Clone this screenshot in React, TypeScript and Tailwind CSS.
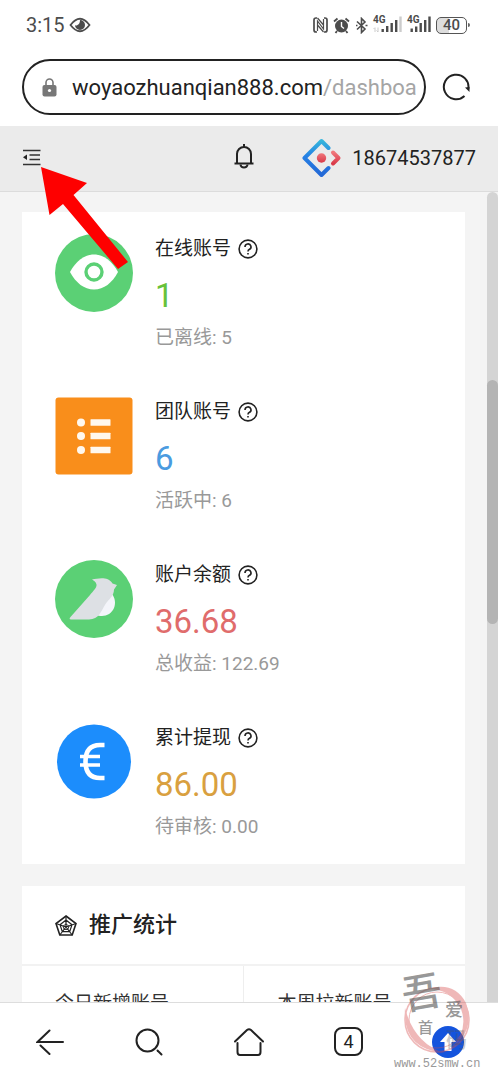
import React from "react";

type StatTone = "green" | "blue" | "red" | "amber";

interface Stat {
  label: string;
  value: string;
  note: string;
  tone: StatTone;
  icon: React.ReactNode;
}

const toneClass: Record<StatTone, string> = {
  green: "text-[#67c23a]",
  blue: "text-[#4a9be0]",
  red: "text-[#e06c6c]",
  amber: "text-[#d9a040]",
};

const EyeBadge = () => (
  <svg viewBox="0 0 78 78" className="size-[78px]" aria-hidden="true">
    <circle cx="39" cy="39" r="39" fill="#5bd075" />
    <path d="M15 38C21 27 29 20.500 39 20.500S57 27 63 38C57 49 49 55.500 39 55.500S21 49 15 38Z" fill="#fff" />
    <circle cx="39" cy="38" r="8" fill="none" stroke="#5bd075" strokeWidth="3.400" />
  </svg>
);

const ListBadge = () => (
  <svg viewBox="0 0 78 78" className="size-[78px]" aria-hidden="true">
    <rect x="0.500" y="0.500" width="77" height="77" rx="3" fill="#f98e1b" />
    <g fill="#fff8ee">
      {[25.5, 39, 53].map((y) => (
        <g key={y}>
          <circle cx="26" cy={y} r="4" />
          <rect x="35.500" y={y - 3.3} width="20" height="6.600" rx="0.600" />
        </g>
      ))}
    </g>
  </svg>
);

const BirdBadge = () => (
  <svg viewBox="0 0 78 78" className="size-[78px]" aria-hidden="true">
    <circle cx="39" cy="39" r="39" fill="#5bd075" />
    <path d="M57 34C60 38 61 43 59 48C57 53 52 56 47 56Q42 56.500 40 54L46 40Z" fill="#f4f5fa" />
    <path d="M37 19.500C43 18.500 53 16 57.500 23.500L62 25L59 29.500C59 36 54 39 50.500 44C46 51 44 59.500 34 59.500H16Q13.500 59.500 15.500 57L35 35C38 31 42 28 41.500 24.500C41 21.500 39 21 37 19.500Z" fill="#dde0e4" />
  </svg>
);

const EuroBadge = () => (
  <svg viewBox="0 0 78 78" className="size-[78px]" aria-hidden="true">
    <circle cx="39" cy="38.500" r="37" fill="#1c8dfc" />
    <path d="M49.500 22H45C35 22 30.500 28 30.500 38.500S35 55 45 55H49.500" fill="none" stroke="#fff" strokeWidth="4.600" />
    <path d="M25 33.500H45M25 42H45" stroke="#fff" strokeWidth="3.400" />
  </svg>
);

const stats: Stat[] = [
  { label: "在线账号", value: "1", note: "已离线: 5", tone: "green", icon: <EyeBadge /> },
  { label: "团队账号", value: "6", note: "活跃中: 6", tone: "blue", icon: <ListBadge /> },
  { label: "账户余额", value: "36.68", note: "总收益: 122.69", tone: "red", icon: <BirdBadge /> },
  { label: "累计提现", value: "86.00", note: "待审核: 0.00", tone: "amber", icon: <EuroBadge /> },
];

const WeakSignalIcon = () => (
  <svg viewBox="0 0 29 18" className="h-[18px] w-[29px]" aria-hidden="true">
    <path d="M2 12V16M0.500 13L2 11.500M5 11.500V16M3.500 14.500L5 16" stroke="#ccc" fill="none" />
    <g fill="#4c4c4c">
      <rect x="8.500" y="13" width="2.400" height="3" />
      <rect x="13" y="10" width="2.400" height="6" />
      <rect x="17.500" y="7" width="2.400" height="9" />
      <rect x="22" y="4" width="2.400" height="12" />
    </g>
    <rect x="26.300" y="0.500" width="2.400" height="15.500" fill="#ccc" />
  </svg>
);

const FullSignalIcon = () => (
  <svg viewBox="0 0 24 18" className="h-[18px] w-6" aria-hidden="true">
    <g fill="#4c4c4c">
      <rect x="3.500" y="12.500" width="2.400" height="3.500" />
      <rect x="8" y="10.500" width="2.400" height="5.500" />
      <rect x="12.500" y="7" width="2.400" height="9" />
      <rect x="17" y="4" width="2.400" height="12" />
      <rect x="21.300" y="0.500" width="2.400" height="15.500" />
    </g>
  </svg>
);

const StatusBar = () => (
  <div className="flex h-[50px] shrink-0 items-center justify-between pr-7 pl-[26px] text-[#4c4c4c]">
    <div className="flex items-center gap-1">
      <span className="text-xl leading-6">3:15</span>
      <svg viewBox="0 0 22 16" className="h-4 w-[22px]" aria-hidden="true">
        <path d="M1.500 8Q11-4.500 20.500 8Q11 20.500 1.500 8Z" fill="none" stroke="currentColor" strokeWidth="1.800" />
        <path d="M11 3A5 5 0 1 1 6 8Q7 9 8.500 8Q11 7 11 3Z" fill="currentColor" />
      </svg>
    </div>
    <div className="flex items-center gap-[5px]">
      <svg viewBox="0 0 15 16" className="h-4 w-[15px]" fill="none" stroke="currentColor" strokeWidth="1.700" aria-hidden="true">
        <path d="M4 1H3Q1 1 1 3V13Q1 15 3 15H4M11 1H12Q14 1 14 3V13Q14 15 12 15H11" />
        <path d="M4.500 14V4L10.500 12V2M4.500 1L10.500 8M4.500 8L10.500 15" strokeWidth="1.200" />
      </svg>
      <svg viewBox="0 0 17 17" className="size-[17px]" fill="none" aria-hidden="true">
        <circle cx="8.500" cy="9" r="6.500" fill="currentColor" />
        <path d="M1 4.500L4.500 1.500M16 4.500L12.500 1.500M4 14L2.500 16M13 14L14.500 16" stroke="currentColor" strokeWidth="1.800" />
        <path d="M8.500 5V9.500L11 11.500" stroke="#fff" strokeWidth="1.400" />
      </svg>
      <svg viewBox="0 0 13 17" className="h-[17px] w-[13px]" fill="none" stroke="currentColor" strokeWidth="1.600" aria-hidden="true">
        <path d="M2 4.500L10 12L6.500 15.500V1.500L10 5L2 12.500M1 8.500H2.500M10.500 8.500H12.500" />
      </svg>
      <div className="relative">
        <WeakSignalIcon />
        <span className="absolute -top-0.5 left-0 text-[10px] leading-3 font-bold">4G</span>
      </div>
      <div className="relative">
        <FullSignalIcon />
        <span className="absolute -top-0.5 left-0 text-[10px] leading-3 font-bold">4G</span>
      </div>
      <div className="flex items-center gap-px">
        <span className="flex h-[17px] w-[31px] items-center justify-center rounded-[5px] border border-[#555] bg-linear-to-r from-[#ddd] from-40% to-white to-40% text-[15px] leading-4 font-medium">
          40
        </span>
        <span className="h-1 w-0.5 rounded-r bg-[#666]" />
      </div>
    </div>
  </div>
);

const AddressBar = () => (
  <div className="flex shrink-0 items-center gap-4 pt-[9px] pr-7 pb-[11px] pl-[22px]">
    <div className="flex h-14 min-w-0 flex-1 items-center gap-[15px] rounded-full border-2 border-[#222] pr-2 pl-[18px]">
      <svg viewBox="0 0 15 19" className="h-[19px] w-[15px] shrink-0" aria-hidden="true">
        <path d="M4 8V4.500A3.500 3.500 0 0 1 11 4.500V8" fill="none" stroke="#777" strokeWidth="1.600" />
        <rect x="0.500" y="7" width="14" height="11.500" rx="2" fill="#777" />
        <circle cx="7.500" cy="12.500" r="1.600" fill="#fff" />
      </svg>
      <div className="min-w-0 flex-1 overflow-hidden pt-0.5 text-[22px] leading-8 whitespace-nowrap text-[#222]">
        woyaozhuanqian888.com<span className="text-[#a5a5a5]">/dashboard</span>
      </div>
    </div>
    <button type="button" aria-label="刷新" className="shrink-0">
      <svg viewBox="0 0 28 28" className="size-7" fill="none" aria-hidden="true">
        <path d="M22.500 23A12.300 12.300 0 1 1 26.300 16" stroke="#222" strokeWidth="2" />
        <path d="M23 14.500L27.500 14V19Z" fill="#222" />
      </svg>
    </button>
  </div>
);

const AppHeader = () => (
  <header className="flex h-[66px] shrink-0 items-center border-b border-[#dcdcdc] bg-[#ebebeb] px-[22px] pb-0.5">
    <button type="button" aria-label="展开菜单">
      <svg viewBox="0 0 19 17" className="h-[17px] w-[19px]" aria-hidden="true">
        <path d="M1 1.500H18.500M7.500 6H18M7.500 10.500H18M1 15.500H18.500" stroke="#333" strokeWidth="1.600" />
        <path d="M1 8.300L5 5.500V11Z" fill="#222" />
      </svg>
    </button>
    <button type="button" aria-label="通知" className="ml-auto pb-1">
      <svg viewBox="0 0 22 26" className="h-[26px] w-[22px]" fill="none" stroke="#222" strokeWidth="2" aria-hidden="true">
        <path d="M11 1V4M4 20V11A7 7 0 0 1 18 11V20M1.500 20.500H20.500" />
        <path d="M7.500 21.500A3.500 3 0 0 0 14.500 21.500" />
      </svg>
    </button>
    <a href="#account" className="ml-[47px] flex items-center gap-2.5 text-[#222]">
      <svg viewBox="0 0 40 40" className="size-10" fill="none" aria-hidden="true">
        <defs>
          <linearGradient id="logoBlue" x1="0" y1="0" x2="0" y2="1">
            <stop offset="0" stopColor="#35b5dc" />
            <stop offset="0.450" stopColor="#2680e4" />
            <stop offset="1" stopColor="#2368d6" />
          </linearGradient>
          <linearGradient id="logoRed" x1="0" y1="0" x2="0" y2="1">
            <stop offset="0" stopColor="#f0777b" />
            <stop offset="1" stopColor="#d93a4a" />
          </linearGradient>
        </defs>
        <path d="M26.500 10L19.500 3L2.500 20L19.500 37L26.500 30" stroke="url(#logoBlue)" strokeWidth="4" strokeLinecap="round" strokeLinejoin="round" />
        <path d="M31 14.500L36.500 20L31 25.500" stroke="url(#logoRed)" strokeWidth="4" strokeLinecap="round" strokeLinejoin="round" />
        <circle cx="19.500" cy="20" r="4.700" fill="url(#logoRed)" />
      </svg>
      <span className="text-xl leading-7">18674537877</span>
    </a>
  </header>
);

const HelpButton = ({ label }: { label: string }) => (
  <button type="button" aria-label={`${label}说明`}>
    <svg viewBox="0 0 20 20" className="size-5" fill="none" stroke="#222" strokeWidth="1.600" aria-hidden="true">
      <circle cx="10" cy="10" r="8.900" />
      <path d="M7 8A3 2.900 0 1 1 11.200 10.500Q10 11.100 10 12.500M10 13.900V15.400" />
    </svg>
  </button>
);

const StatRow = ({ stat }: { stat: Stat }) => (
  <li className="flex gap-[22px] pt-4 pb-[21px] pl-[33px]">
    <div className="pt-1.5">{stat.icon}</div>
    <div>
      <div className="flex items-center gap-[7px] text-[19px] leading-[42px] text-[#222]">
        <span>{stat.label}</span>
        <HelpButton label={stat.label} />
      </div>
      <p className={`text-[33px] leading-[52px] ${toneClass[stat.tone]}`}>{stat.value}</p>
      <p className="text-[19px] leading-8 text-[#999]">{stat.note}</p>
    </div>
  </li>
);

const RadarIcon = () => (
  <svg viewBox="0 0 22 21" className="h-[21px] w-[22px]" fill="none" stroke="#222" aria-hidden="true">
    <path d="M11 1L21 8.500L17.200 20H4.800L1 8.500Z" strokeWidth="1.600" />
    <path d="M11 5L17 9.700L14.700 16.700H7.300L5 9.700ZM11 1V12M21 8.500L11 12M17.200 20L11 12M4.800 20L11 12M1 8.500L11 12" strokeWidth="1.200" />
    <path d="M11 9L14 11.200L12.800 14.500H9.200L8 11.200Z" strokeWidth="0.900" />
  </svg>
);

const PromotionCard = () => (
  <section className="bg-white">
    <h2 className="flex h-20 items-center gap-3 border-b-2 border-[#f2f2f2] pl-[33px] text-[22px] leading-8 font-medium text-[#222]">
      <RadarIcon />
      推广统计
    </h2>
    <div className="grid grid-cols-2 text-[19px] leading-7 text-[#333]">
      <div className="border-r border-[#eee] pt-6 pb-16 pl-[33px]">今日新增账号</div>
      <div className="pt-6 pb-16 pl-[34px]">本周拉新账号</div>
    </div>
  </section>
);

const BottomNav = () => (
  <nav className="flex h-[78px] shrink-0 items-center border-t border-[#ddd] bg-white text-[#222]">
    <button type="button" aria-label="后退" className="flex flex-1 justify-center">
      <svg viewBox="0 0 28 26" className="h-[26px] w-7" fill="none" stroke="currentColor" strokeWidth="2" strokeLinecap="round" aria-hidden="true">
        <path d="M13.500 1.500L1.500 13H27M4.500 16.500L13.500 25" />
      </svg>
    </button>
    <button type="button" aria-label="搜索" className="flex flex-1 justify-center">
      <svg viewBox="0 0 28 28" className="size-7" fill="none" stroke="currentColor" strokeWidth="2" strokeLinecap="round" aria-hidden="true">
        <circle cx="12.500" cy="12.500" r="11" />
        <path d="M22.500 22.500L26.500 26.500" />
      </svg>
    </button>
    <button type="button" aria-label="主页" className="flex flex-1 justify-center">
      <svg viewBox="0 0 30 28" className="h-7 w-[30px]" fill="none" stroke="currentColor" strokeWidth="2" strokeLinecap="round" strokeLinejoin="round" aria-hidden="true">
        <path d="M1 13.500L13 2Q15 0.500 17 2L29 13.500M3.500 15V24Q3.500 27 6 27H24Q26.500 27 26.500 24V15" />
      </svg>
    </button>
    <button type="button" aria-label="标签页" className="flex flex-1 justify-center">
      <span className="flex size-[29px] items-center justify-center rounded-lg border-2 border-[#222] text-lg leading-6">4</span>
    </button>
    <button type="button" aria-label="菜单" className="flex flex-1 justify-center">
      <svg viewBox="0 0 32 32" className="size-8" aria-hidden="true">
        <circle cx="16" cy="16" r="16" fill="#1454dd" />
        <path d="M16 7L24 16H19.500V25H12.500V16H8Z" fill="#fff" />
      </svg>
    </button>
  </nav>
);

const Seal = () => (
  <div className="pointer-events-none absolute right-4 bottom-2.5 w-[88px]">
    <svg viewBox="0 -7 88 100" className="h-[100px] w-[88px]" aria-hidden="true">
      <g fill="none" stroke="#d85050" opacity="0.400">
        <circle cx="43" cy="55" r="32" strokeWidth="1.500" />
        <circle cx="43" cy="55" r="28" strokeWidth="1" />
        <path d="M34 24Q60 16 72 38Q82 66 56 84Q75 66 67 44Q57 24 34 24Z" fill="#d85050" stroke="none" />
        <path d="M11 43Q8 84 50 88Q20 78 11 43Z" fill="#d85050" stroke="none" />
      </g>
      <g fill="#555" opacity="0.600" fontFamily="'Noto Sans CJK SC', sans-serif" fontWeight="500">
        <text x="8" y="42" fontSize="40" transform="rotate(-10 28 30)">吾</text>
        <text x="24" y="68" fontSize="15">首</text>
        <text x="51" y="51" fontSize="18">爱</text>
        <text x="52" y="82" fontSize="21" opacity="0.500">码</text>
      </g>
    </svg>
    <span className="block font-['Liberation_Mono',monospace] text-xs leading-3 whitespace-nowrap text-[#999]">www.52smw.cn</span>
  </div>
);

const PointerArrow = () => (
  <svg viewBox="0 0 90 104" className="pointer-events-none absolute top-[167px] left-10 h-[104px] w-[90px]" aria-hidden="true">
    <path d="M1 0L47 16L33.500 28L88 95L78 102L23 37L9.500 48Z" fill="#fe0000" />
  </svg>
);

export default function App() {
  return (
    <div className="relative flex h-screen flex-col overflow-hidden bg-white font-[Roboto,'Noto_Sans_CJK_SC',sans-serif]">
      <StatusBar />
      <AddressBar />
      <AppHeader />
      <div className="flex min-h-0 flex-1 bg-[#f4f4f4]">
        <main className="flex min-w-0 flex-1 flex-col gap-[22px] overflow-hidden px-[22px] pt-5">
          <ul className="bg-white">
            {stats.map((stat) => (
              <StatRow key={stat.label} stat={stat} />
            ))}
          </ul>
          <PromotionCard />
        </main>
        <div className="w-[11px] shrink-0 rounded-t-md bg-[#d4d4d4] pt-[188px]">
          <div className="h-[244px] rounded-full bg-[#b4b4b4]" />
        </div>
      </div>
      <BottomNav />
      <PointerArrow />
      <Seal />
    </div>
  );
}
